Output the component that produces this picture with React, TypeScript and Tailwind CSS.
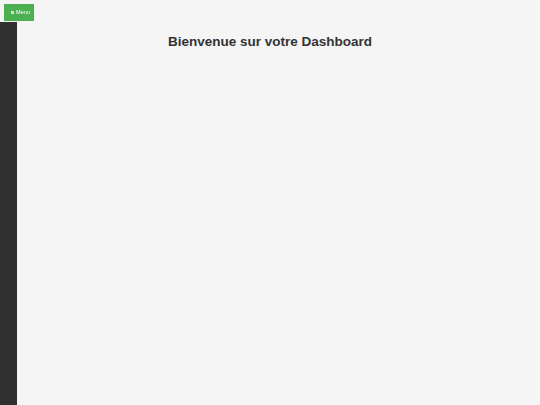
export default function App() {
  return (
    <div className="min-h-screen bg-[#f5f5f5] font-['Liberation_Sans',Arial,sans-serif]">
      {/* sidebar (collapsed) */}
      <aside className="fixed left-0 top-[22px] bottom-0 w-[17px] bg-[#303030]" />

      <button
        type="button"
        className="fixed left-[4px] top-[4px] flex h-[17px] w-[30px] items-center justify-center gap-[2px] bg-[#4caf50] pl-[3px] text-[5.6px] leading-none text-white"
      >
        <svg width="3" height="3" viewBox="0 0 3 3" className="shrink-0">
          <rect x="0" y="0" width="3" height="0.7" fill="currentColor" />
          <rect x="0" y="1.15" width="3" height="0.7" fill="currentColor" />
          <rect x="0" y="2.3" width="3" height="0.7" fill="currentColor" />
        </svg>
        <span>Menu</span>
      </button>

      <main className="pt-[35px]">
        <h1 className="text-center text-[13.5px] font-bold leading-none text-[#333]">
          Bienvenue sur votre Dashboard
        </h1>
      </main>
    </div>
  );
}
